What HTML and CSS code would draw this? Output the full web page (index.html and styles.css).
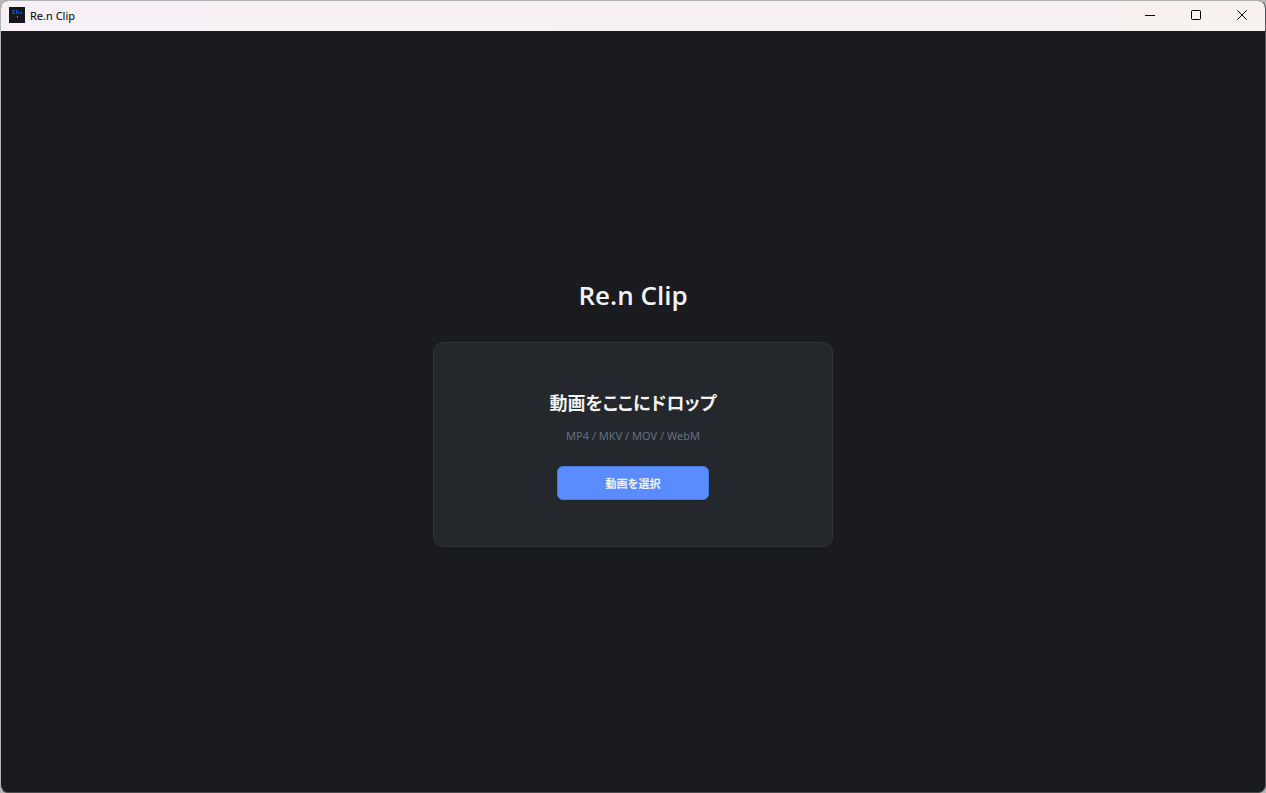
FILE: index.html
```html
<!DOCTYPE html>
<html lang="ja">
<head>
<meta charset="utf-8">
<meta name="viewport" content="width=device-width, initial-scale=1">
<title>Re.n Clip</title>
<link rel="stylesheet" href="styles.css">
</head>
<body>
<div class="window">
  <header class="titlebar">
    <svg class="app-icon" viewBox="0 0 16 16" shape-rendering="crispEdges" aria-hidden="true">
      <path fill="#15171c" d="M0 0h16v16H0z"/>
      <path fill="#1c5fd0" d="M4 3h2v1H4zM7 3h1v1H7zM4 4h1v1H4zM7 5h1v1H7zM9 5h1v1H9zM11 5h1v1h-1zM3 6h1v1H3zM5 6h1v1H5z"/>
      <path fill="#174391" d="M3 5h2v1H3zM8 3h1v1H8zM7 4h1v1H7zM7 6h1v1H7zM9 6h1v1H9zM12 5h1v2h-1z"/>
      <path fill="#777b80" d="M8 9h1v2H8z"/>
    </svg>
    <span class="titlebar-name">Re.n Clip</span>
    <div class="window-controls">
      <button class="control" type="button" aria-label="最小化">
        <svg class="control-icon" viewBox="0 0 12 12"><path d="M1 6.5h10"/></svg>
      </button>
      <button class="control" type="button" aria-label="最大化">
        <svg class="control-icon" viewBox="0 0 12 12"><rect x="1.5" y="1.5" width="9" height="9" rx="1"/></svg>
      </button>
      <button class="control" type="button" aria-label="閉じる">
        <svg class="control-icon" viewBox="0 0 12 12"><path d="M1.3 1.3l9.4 9.4M10.7 1.3l-9.4 9.4"/></svg>
      </button>
    </div>
  </header>
  <main class="start">
    <h1 class="start-title">Re.n Clip</h1>
    <section class="drop-zone">
      <h2 class="drop-title">動画をここにドロップ</h2>
      <p class="drop-formats">MP4 / MKV / MOV / WebM</p>
      <button class="select-button" type="button">動画を選択</button>
    </section>
  </main>
</div>
</body>
</html>
```
FILE: styles.css
```css
* {
  box-sizing: border-box;
}

body {
  margin: 0;
  background: #b9b7b8;
  font-family: "Noto Sans", "Noto Sans CJK JP", sans-serif;
}

.window {
  display: flex;
  flex-direction: column;
  min-height: 100vh;
  border: 1px solid #b4b3b4;
  border-right-color: #55565a;
  border-bottom-color: #4a4a4c;
  border-radius: 8px;
  overflow: hidden;
  background: #1a1b1e;
}

.titlebar {
  display: flex;
  align-items: center;
  height: 30px;
  padding: 0 0 2px 8px;
  background: linear-gradient(90deg, #f7f0f7, #f7f1f0);
  color: #000;
}

.app-icon {
  width: 16px;
  height: 16px;
  margin-right: 5px;
}

.titlebar-name {
  font-size: 11px;
}

.window-controls {
  display: flex;
  align-self: stretch;
  margin-left: auto;
}

.control {
  display: flex;
  align-items: center;
  justify-content: center;
  width: 46px;
  padding: 0;
  border: 0;
  background: transparent;
}

.control-icon {
  width: 12px;
  height: 12px;
  fill: none;
  stroke: #000;
}

.start {
  display: flex;
  flex: 1;
  flex-direction: column;
  align-items: center;
  justify-content: center;
  gap: 28px;
  padding: 24px;
}

.start-title {
  margin: 0;
  color: #f1f3f5;
  font-family: "Open Sans", sans-serif;
  font-size: 26px;
  font-weight: 600;
  line-height: 38px;
}

.drop-zone {
  display: flex;
  flex-direction: column;
  align-items: center;
  width: 100%;
  max-width: 400px;
  padding: 46px 24px;
  border: 1px solid #2f3439;
  border-radius: 10px;
  background: #24272b;
}

.drop-title {
  margin: 0 0 10px;
  color: #f1f3f5;
  font-size: 18px;
  font-weight: 700;
  font-feature-settings: "palt";
  line-height: 29px;
}

.drop-formats {
  margin: 0 0 22px;
  color: #667085;
  font-size: 11px;
  line-height: 16px;
}

.select-button {
  width: 152px;
  height: 34px;
  padding: 0;
  border: 1px solid #4c7be0;
  border-radius: 6px;
  background: #5b8cff;
  color: #f1f3f5;
  font-family: inherit;
  font-size: 11px;
  font-weight: 700;
}
```
